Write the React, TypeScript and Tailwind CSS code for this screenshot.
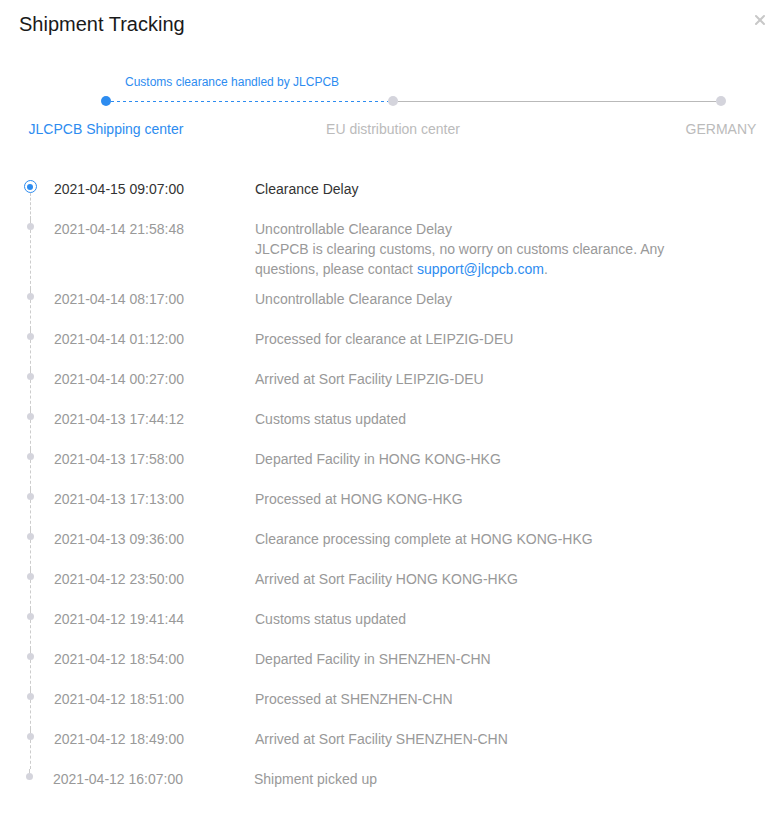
import { X } from "lucide-react"

interface TrackEvent {
  time: string
  desc: string
  note?: boolean
}

const events: TrackEvent[] = [
  { time: "2021-04-15 09:07:00", desc: "Clearance Delay" },
  { time: "2021-04-14 21:58:48", desc: "Uncontrollable Clearance Delay", note: true },
  { time: "2021-04-14 08:17:00", desc: "Uncontrollable Clearance Delay" },
  { time: "2021-04-14 01:12:00", desc: "Processed for clearance at LEIPZIG-DEU" },
  { time: "2021-04-14 00:27:00", desc: "Arrived at Sort Facility LEIPZIG-DEU" },
  { time: "2021-04-13 17:44:12", desc: "Customs status updated" },
  { time: "2021-04-13 17:58:00", desc: "Departed Facility in HONG KONG-HKG" },
  { time: "2021-04-13 17:13:00", desc: "Processed at HONG KONG-HKG" },
  { time: "2021-04-13 09:36:00", desc: "Clearance processing complete at HONG KONG-HKG" },
  { time: "2021-04-12 23:50:00", desc: "Arrived at Sort Facility HONG KONG-HKG" },
  { time: "2021-04-12 19:41:44", desc: "Customs status updated" },
  { time: "2021-04-12 18:54:00", desc: "Departed Facility in SHENZHEN-CHN" },
  { time: "2021-04-12 18:51:00", desc: "Processed at SHENZHEN-CHN" },
  { time: "2021-04-12 18:49:00", desc: "Arrived at Sort Facility SHENZHEN-CHN" },
  { time: "2021-04-12 16:07:00", desc: "Shipment picked up" },
]

function Stepper() {
  return (
    <div>
      <div className="mt-[36px] ml-[125px] h-[16px] text-[12px] leading-[16px] text-[#2d8cf0]">
        Customs clearance handled by JLCPCB
      </div>
      {/* dots + connectors */}
      <div className="mt-[6px] ml-[101px] flex h-[10px] items-center">
        <div className="h-[10px] w-[10px] rounded-full bg-[#2d8cf0]" />
        <div className="h-px w-[277px] bg-[repeating-linear-gradient(to_right,#2d8cf0_0_3px,transparent_3px_6px)]" />
        <div className="h-[10px] w-[10px] rounded-full bg-[#d4d4dc]" />
        <div className="h-px w-[318px] bg-[#b9b9b9]" />
        <div className="h-[10px] w-[10px] rounded-full bg-[#d4d4dc]" />
      </div>
      <div className="mt-[13px] flex text-[14px] leading-[20px]">
        <div className="ml-[26px] w-[160px] text-center text-[#2d8cf0]">JLCPCB Shipping center</div>
        <div className="ml-[127px] w-[160px] text-center text-[#bbbbbb]">EU distribution center</div>
        <div className="ml-[208px] w-[80px] text-center text-[#bbbbbb]">GERMANY</div>
      </div>
    </div>
  )
}

function Timeline() {
  return (
    <div className="mt-[40px] ml-[24px]">
      {events.map((ev, i) => {
        const first = i === 0
        const last = i === events.length - 1
        const txt = first ? "text-[#333333]" : "text-[#999999]"
        return (
          <div key={i} className={`flex min-h-[40px] ${last ? "-ml-[1px]" : ""}`}>
            <div className="flex w-[12px] flex-col items-center">
              {first ? (
                <div className="mt-[1px] flex h-[13px] w-[13px] shrink-0 items-center justify-center rounded-full border-[1.5px] border-[#2d8cf0]">
                  <div className="h-[6px] w-[6px] rounded-full bg-[#2d8cf0]" />
                </div>
              ) : (
                <>
                  <div className="h-[4px] border-l border-dashed border-[#cccccc]" />
                  <div className="h-[7px] w-[7px] shrink-0 rounded-full bg-[#d4d4dc]" />
                </>
              )}
              {!last && <div className="w-0 flex-1 border-l border-dashed border-[#cccccc]" />}
            </div>
            <div className={`ml-[18px] w-[201px] text-[14px] leading-[20px] ${txt}`}>{ev.time}</div>
            <div className={`w-[420px] pb-[10px] text-[14px] leading-[20px] ${txt}`}>
              <div>{ev.desc}</div>
              {ev.note && (
                <div>
                  JLCPCB is clearing customs, no worry on customs clearance. Any questions, please contact{" "}
                  <a className="text-[#2d8cf0]">support@jlcpcb.com</a>.
                </div>
              )}
            </div>
          </div>
        )
      })}
    </div>
  )
}

export default function App() {
  return (
    <div className="min-h-[813px] w-[766px] overflow-hidden bg-white font-['Liberation_Sans',Arial,sans-serif]">
      <div className="flex items-start justify-between pt-[10px] pl-[19px]">
        <h1 className="text-[20px] leading-[28px] text-[#1a1a1a]">Shipment Tracking</h1>
        <button className="-mr-[2px] mt-[2px] text-[#c8c8c8]" aria-label="Close">
          <X size={16} strokeWidth={3} />
        </button>
      </div>
      <Stepper />
      <Timeline />
    </div>
  )
}
